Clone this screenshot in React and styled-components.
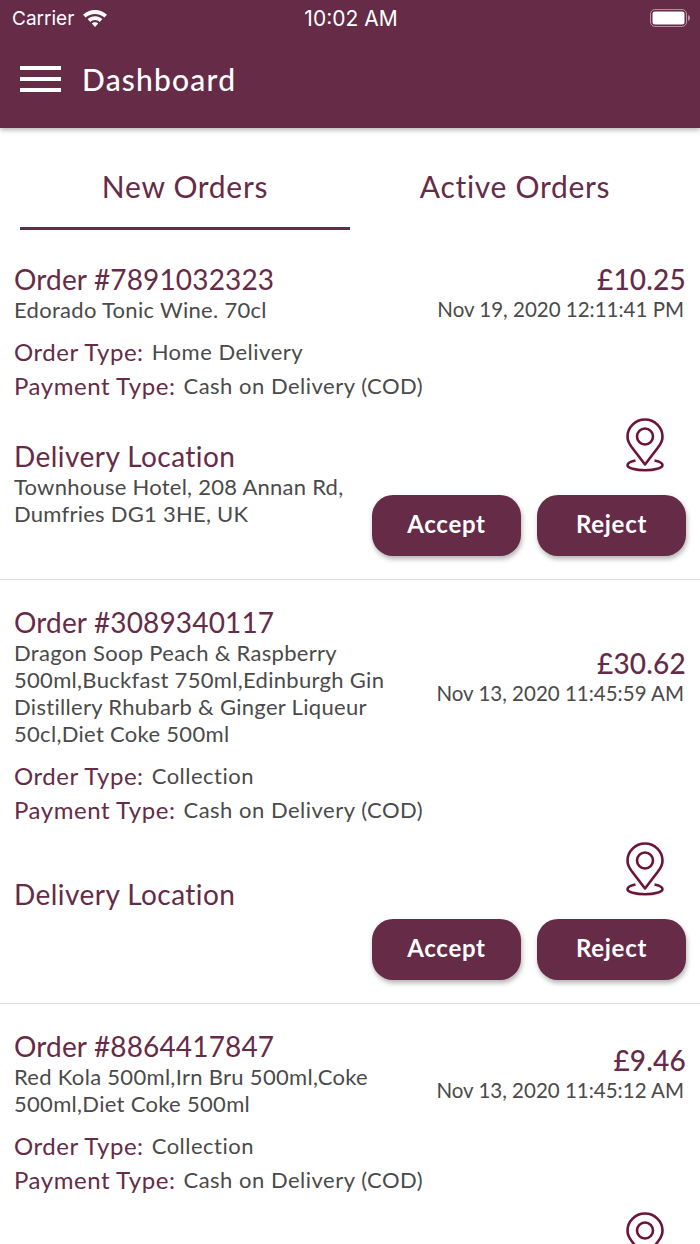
import styled, { createGlobalStyle } from "styled-components";

const Global = createGlobalStyle`
  html, body { margin: 0; padding: 0; background: #fff; }
  * { box-sizing: border-box; }
`;

const plum = "#652b47";
const font = `"Lato", "Noto Sans", sans-serif`;

const Page = styled.div`
  width: 700px;
  height: 1244px;
  overflow: hidden;
  font-family: ${font};
  color: #4a4a4a;
  background: #fff;
`;
const Header = styled.header`
  position: relative;
  z-index: 1;
  height: 128px;
  background: ${plum};
  box-shadow: 0 2px 5px rgba(0, 0, 0, 0.3);
  color: #fff;
`;
const StatusBar = styled.div`
  height: 36px;
  padding: 0 10px 0 12px;
  display: grid;
  grid-template-columns: 1fr auto 1fr;
  align-items: center;
  font-family: "Inter", sans-serif;
  font-size: 21px;
`;
const Carrier = styled.div`
  display: flex;
  align-items: center;
  gap: 8px;
  font-size: 19px;
`;
const BatteryWrap = styled.div`
  display: flex;
  justify-content: flex-end;
`;
const Bar = styled.div`
  padding: 12px 20px 0;
  height: 74px;
  display: flex;
  align-items: center;
  gap: 21px;
`;
const Burger = styled.div`
  width: 41px;
  display: flex;
  flex-direction: column;
  gap: 7px;
  span {
    height: 4px;
    background: #fff;
  }
`;
const Title = styled.div`
  font-size: 30px;
  font-weight: 500;
  letter-spacing: 1.2px;
`;
const Tabs = styled.nav`
  height: 102px;
  padding: 0 20px;
  display: grid;
  grid-template-columns: 330px 330px;
`;
const Tab = styled.div`
  display: flex;
  align-items: center;
  justify-content: center;
  padding-top: 16px;
  font-size: 30px;
  letter-spacing: 0.7px;
  color: ${plum};
  border-bottom: 3px solid ${(p) => (p.$active ? plum : "transparent")};
`;
const List = styled.main`
  padding-top: 7px;
`;
const Card = styled.section`
  padding: 25px 14px 23px;
  border-bottom: 1px solid #dcdcdc;
`;
const TopRow = styled.div`
  display: flex;
  justify-content: space-between;
  align-items: center;
`;
const Left = styled.div`
  width: 375px;
`;
const OrderNo = styled.div`
  font-size: 28px;
  line-height: 34px;
  letter-spacing: 0.15px;
  color: ${plum};
`;
const Items = styled.div`
  font-size: 22px;
  line-height: 27px;
  letter-spacing: 0.3px;
  white-space: nowrap;
`;
const Right = styled.div`
  text-align: right;
`;
const Price = styled.div`
  font-size: 28px;
  line-height: 34px;
  font-weight: 500;
  letter-spacing: 0.2px;
  color: ${plum};
`;
const DateText = styled.div`
  font-size: 20.5px;
  line-height: 27px;
  padding-right: 2px;
`;
const Info = styled.div`
  margin-top: 13px;
  display: flex;
  flex-direction: column;
  gap: 4px;
`;
const InfoRow = styled.div`
  display: flex;
  align-items: center;
  gap: 8px;
  height: 30px;
  font-size: 22px;
  letter-spacing: 0.5px;
`;
const InfoLabel = styled.span`
  font-size: 24px;
  letter-spacing: 0.55px;
  color: ${plum};
`;
const Location = styled.div`
  margin-top: 18px;
  display: flex;
  justify-content: space-between;
  align-items: center;
`;
const LocationText = styled.div`
  width: 345px;
  padding-bottom: 8px;
`;
const LocationTitle = styled.div`
  font-size: 28px;
  line-height: 34px;
  letter-spacing: 0.45px;
  color: ${plum};
`;
const Address = styled.div`
  font-size: 22px;
  line-height: 27px;
  min-height: 27px;
  letter-spacing: 0.25px;
  white-space: nowrap;
`;
const Actions = styled.div`
  width: 315px;
  margin-left: auto;
  display: flex;
  flex-direction: column;
  align-items: flex-end;
  gap: 23px;
`;
const PinWrap = styled.div`
  width: 100%;
  height: 54px;
  padding-right: 22px;
  display: flex;
  justify-content: flex-end;
`;
const Buttons = styled.div`
  display: flex;
  gap: 16px;
`;
const ActionButton = styled.button`
  width: 149px;
  height: 61px;
  padding: 0 0 4px;
  border: 0;
  border-radius: 21px;
  background: ${plum};
  color: #fff;
  font-family: ${font};
  font-size: 24px;
  font-weight: 700;
  letter-spacing: 0.7px;
  box-shadow: 1px 3px 5px rgba(0, 0, 0, 0.3);
`;

const Wifi = () => (
  <svg width="26" height="20" viewBox="0 0 26 20" fill="#fff">
    <path d="M13 2C8.4 2 4.4 3.8 1 6.8l2.6 2.8C6.2 7.2 9.4 5.9 13 5.9s6.8 1.3 9.4 3.7L25 6.8C21.6 3.8 17.6 2 13 2z" />
    <path d="M13 8.2c-2.9 0-5.4 1.1-7.4 2.9l2.7 2.8c1.3-1.1 2.9-1.8 4.7-1.8s3.4.7 4.7 1.8l2.7-2.8c-2-1.8-4.5-2.9-7.4-2.9z" />
    <path d="M13 14.2c-1.3 0-2.4.5-3.2 1.2L13 19l3.2-3.6c-.8-.7-1.9-1.2-3.2-1.2z" />
  </svg>
);

const Battery = () => (
  <svg width="40" height="20" viewBox="0 0 40 20">
    <rect x="0.5" y="1.500" width="36" height="17" rx="4.500" fill="none" stroke="#fff" strokeOpacity="0.5" />
    <rect x="2.500" y="3.500" width="32" height="13" rx="2.500" fill="#fff" />
    <path d="M38 7c1.300.4 2 1.600 2 3s-.7 2.600-2 3z" fill="#fff" fillOpacity="0.5" />
  </svg>
);

const Pin = () => (
  <svg width="38" height="54" viewBox="0 0 38 54" fill="none" stroke="#6d1239" strokeWidth="2.6">
    <path d="M19 46.500 6 29.500C3 25.800 1.500 22.800 1.500 18.800 1.500 9.200 9.300 1.500 19 1.500s17.500 7.700 17.500 17.300c0 4-1.500 7-4.500 10.700z" strokeLinejoin="round" />
    <circle cx="19" cy="18.500" r="8" />
    <path d="M9.500 42.500C4.500 43.500 1.500 45.300 1.500 47.300c0 2.700 7.800 5 17.500 5s17.500-2.300 17.500-5c0-2-3-3.800-8-4.800" />
  </svg>
);

const orders = [
  {
    no: "7891032323",
    items: ["Edorado Tonic Wine. 70cl"],
    price: "£10.25",
    date: "Nov 19, 2020 12:11:41 PM",
    type: "Home Delivery",
    address: ["Townhouse Hotel, 208 Annan Rd,", "Dumfries DG1 3HE, UK"],
    showFooter: true,
  },
  {
    no: "3089340117",
    items: [
      "Dragon Soop Peach & Raspberry",
      "500ml,Buckfast 750ml,Edinburgh Gin",
      "Distillery Rhubarb & Ginger Liqueur",
      "50cl,Diet Coke 500ml",
    ],
    price: "£30.62",
    date: "Nov 13, 2020 11:45:59 AM",
    type: "Collection",
    address: [],
    showFooter: true,
  },
  {
    // runs off the bottom of the screen, only the pin is visible
    no: "8864417847",
    items: ["Red Kola 500ml,Irn Bru 500ml,Coke", "500ml,Diet Coke 500ml"],
    price: "£9.46",
    date: "Nov 13, 2020 11:45:12 AM",
    type: "Collection",
    address: [],
    showFooter: false,
  },
];

const Lines = ({ lines }) =>
  lines.map((line) => <div key={line}>{line}</div>);

const OrderCard = ({ order }) => (
  <Card>
    <TopRow>
      <Left>
        <OrderNo>Order #{order.no}</OrderNo>
        <Items>
          <Lines lines={order.items} />
        </Items>
      </Left>
      <Right>
        <Price>{order.price}</Price>
        <DateText>{order.date}</DateText>
      </Right>
    </TopRow>
    <Info>
      <InfoRow>
        <InfoLabel>Order Type:</InfoLabel>
        {order.type}
      </InfoRow>
      <InfoRow>
        <InfoLabel>Payment Type:</InfoLabel>
        Cash on Delivery (COD)
      </InfoRow>
    </Info>
    <Location>
      {order.showFooter && (
        <LocationText>
          <LocationTitle>Delivery Location</LocationTitle>
          <Address>
            <Lines lines={order.address} />
          </Address>
        </LocationText>
      )}
      <Actions>
        <PinWrap>
          <Pin />
        </PinWrap>
        {order.showFooter && (
          <Buttons>
            <ActionButton>Accept</ActionButton>
            <ActionButton>Reject</ActionButton>
          </Buttons>
        )}
      </Actions>
    </Location>
  </Card>
);

export default function App() {
  return (
    <Page>
      <Global />
      <Header>
        <StatusBar>
          <Carrier>
            Carrier <Wifi />
          </Carrier>
          <div>10:02 AM</div>
          <BatteryWrap>
            <Battery />
          </BatteryWrap>
        </StatusBar>
        <Bar>
          <Burger>
            <span />
            <span />
            <span />
          </Burger>
          <Title>Dashboard</Title>
        </Bar>
      </Header>
      <Tabs>
        <Tab $active>New Orders</Tab>
        <Tab>Active Orders</Tab>
      </Tabs>
      <List>
        {orders.map((order) => (
          <OrderCard key={order.no} order={order} />
        ))}
      </List>
    </Page>
  );
}
